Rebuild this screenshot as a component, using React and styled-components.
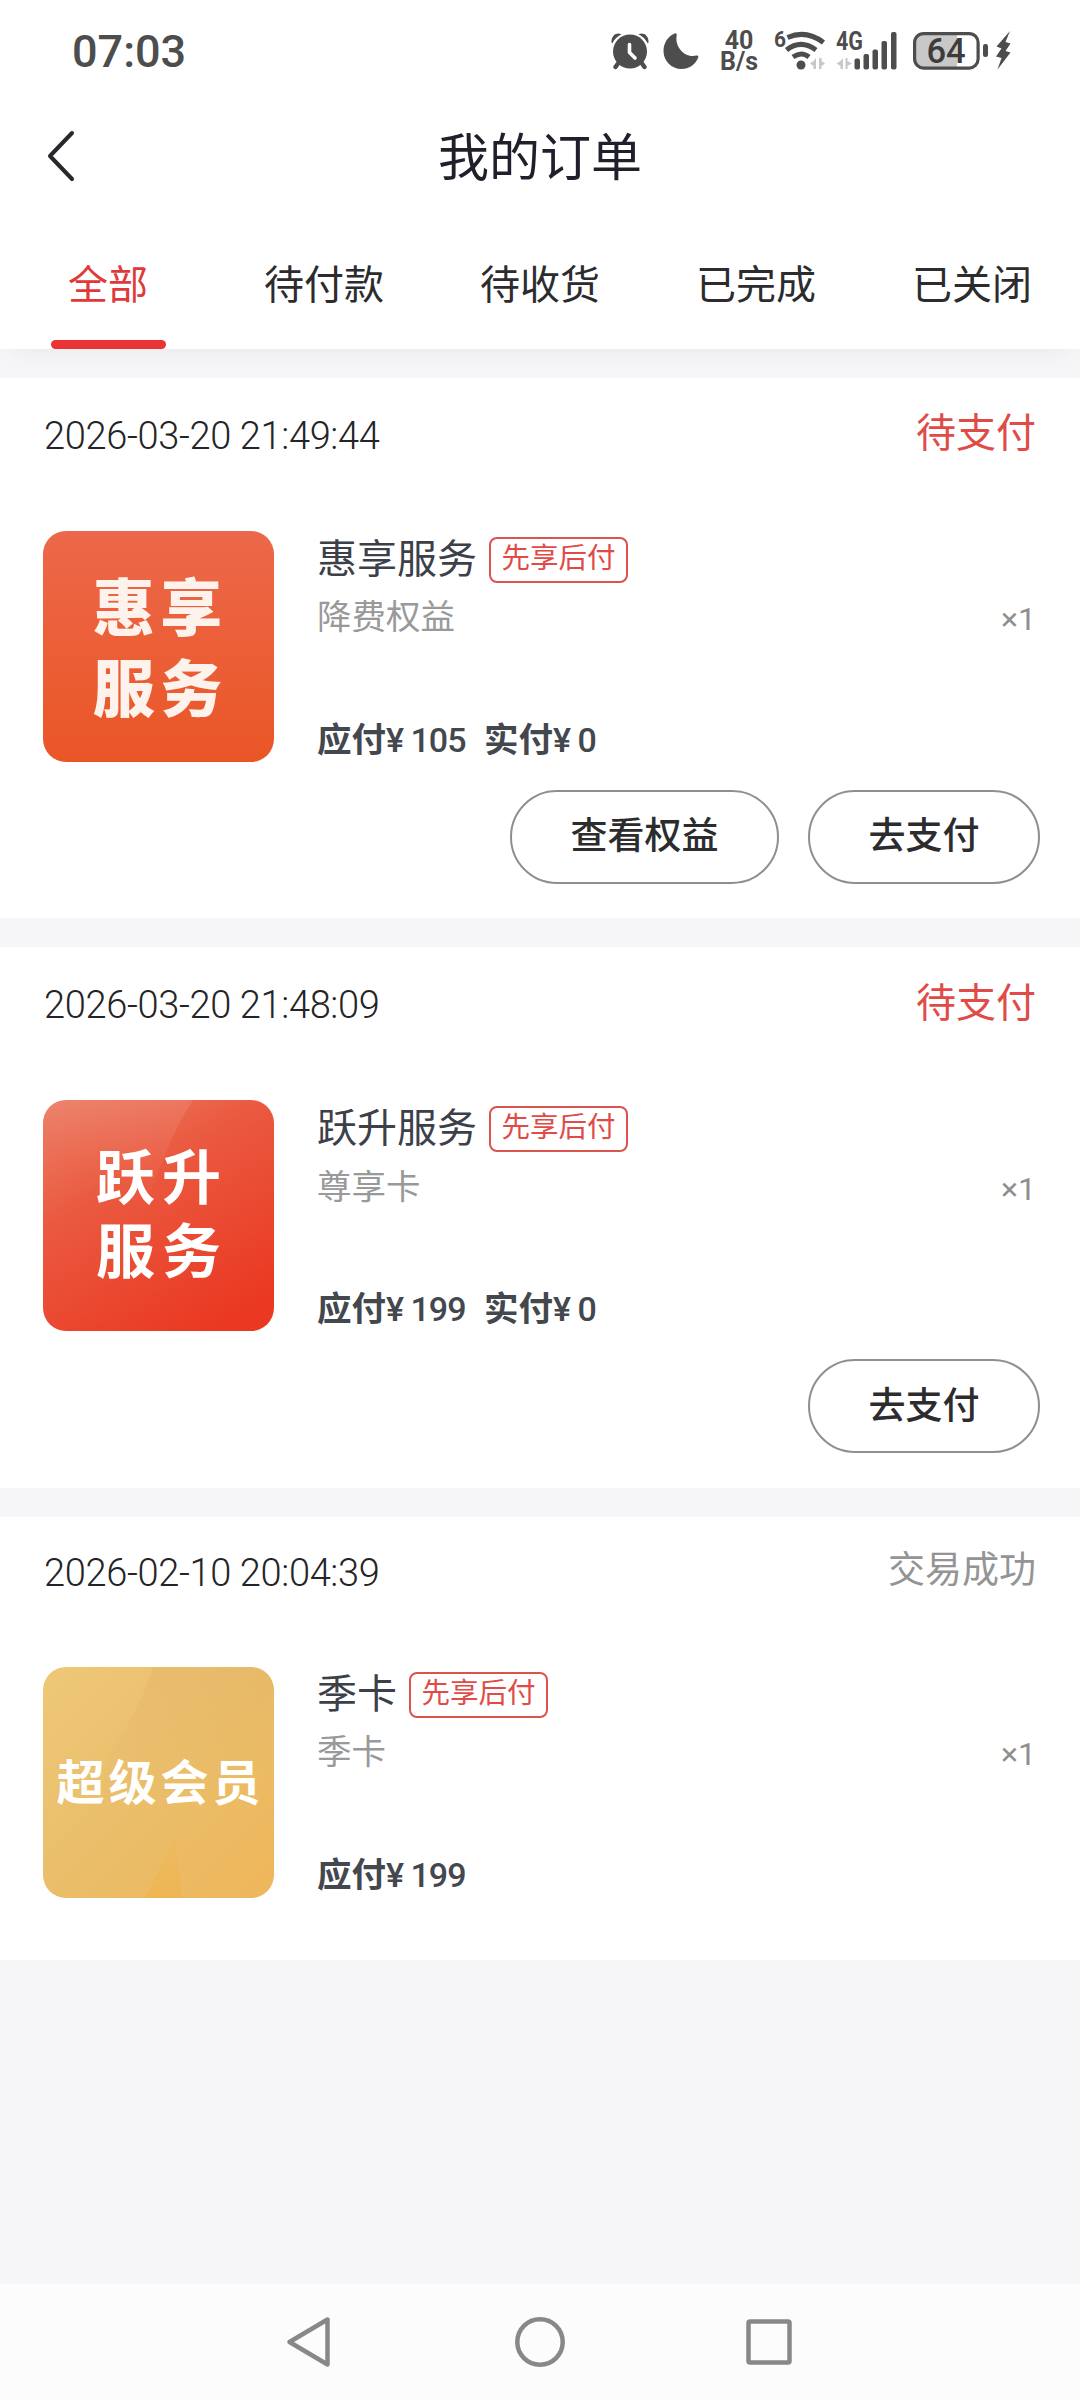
import React from 'react';
import styled, { createGlobalStyle } from 'styled-components';

const orders = [
  {
    id: 1,
    time: '2026-03-20 21:49:44',
    status: '待支付',
    name: '惠享服务',
    tag: '先享后付',
    desc: '降费权益',
    count: 1,
    due: 105,
    paid: 0,
    cover: 'orange',
    coverText: '惠享\n服务',
    actions: ['查看权益', '去支付'],
  },
  {
    id: 2,
    time: '2026-03-20 21:48:09',
    status: '待支付',
    name: '跃升服务',
    tag: '先享后付',
    desc: '尊享卡',
    count: 1,
    due: 199,
    paid: 0,
    cover: 'red',
    coverText: '跃升\n服务',
    actions: ['去支付'],
  },
  {
    id: 3,
    time: '2026-02-10 20:04:39',
    status: '交易成功',
    done: true,
    name: '季卡',
    tag: '先享后付',
    desc: '季卡',
    count: 1,
    due: 199,
    cover: 'gold',
    coverText: '超级会员',
    actions: [],
  },
];

const tabs = ['全部', '待付款', '待收货', '已完成', '已关闭'];

function StatusIcons() {
  return (
    <Icons>
      <svg width="38" height="40" viewBox="0 0 38 40">
        <circle cx="19" cy="21.5" r="17" fill="#4d4d4d" />
        <path d="M7 33.500 4.500 37M31 33.500 33.500 37" stroke="#4d4d4d" strokeWidth="4.400" strokeLinecap="round" />
        <path d="M0.500 12.500C0 5.500 5.500 2 10.500 4.200 6.500 6.200 3.500 9 1.200 13.500ZM37.500 12.500C38 5.500 32.500 2 27.500 4.200 31.500 6.200 34.500 9 36.800 13.500Z" fill="#4d4d4d" />
        <path d="M18.500 14.500V22.500L24 28" stroke="#fff" strokeWidth="3.600" strokeLinecap="round" strokeLinejoin="round" fill="none" />
      </svg>
      <Moon width="36" height="40" viewBox="0 0 36 40">
        <path d="M11.500 3.500C13 3 14 4 13.700 5.500 11.500 16 21 28.500 33.500 25.600 35 25.300 35.700 26.200 35.200 27.500 32.500 34.500 26 39 18.500 39 8.500 39 0.500 31 0.500 21 0.500 13 5 6.300 11.500 3.500Z" fill="#4d4d4d" />
      </Moon>
      <Speed>40{'\n'}B/s</Speed>
      <Wifi width="54" height="46" viewBox="0 -4 54 46">
        <text x="1" y="17" fontSize="22" fontWeight="700" fill="#4d4d4d" textLength="12" lengthAdjust="spacingAndGlyphs">6</text>
        <g fill="none" stroke="#4d4d4d" strokeWidth="5">
          <path d="M14.500 7.500C26 2.500 38 3 50.500 12.500" />
          <path d="M13.500 20C23 12.500 33 12.500 43 20" />
          <path d="M20 27C25.500 23 31 23 36 27" />
        </g>
        <circle cx="28" cy="35" r="4.500" fill="#4d4d4d" />
        <path d="M43 28V39H40.500V36L37 33.500 40.500 31ZM46 28V39H48.500V36L52 33.500 48.500 31V28Z" fill="#c8c8c8" />
      </Wifi>
      <Cell width="62" height="46" viewBox="0 -4 62 46">
        <text x="1" y="19.500" fontSize="25" fontWeight="700" fill="#4d4d4d" textLength="27" lengthAdjust="spacingAndGlyphs">4G</text>
        <path d="M8 28V39H5.500V36L1.500 33.500 5.500 31ZM10.500 28V39H12.500V36L17 33.500 12.500 31V28Z" fill="#c8c8c8" />
        <g fill="#4d4d4d">
          <rect x="19.500" y="28.500" width="5.500" height="11" rx="2" />
          <rect x="28.500" y="24" width="5.500" height="15.500" rx="2" />
          <rect x="37.500" y="19.500" width="5.500" height="20" rx="2" />
          <rect x="46.500" y="11" width="5.500" height="28.500" rx="2" />
          <rect x="56" y="2" width="5.500" height="37.500" rx="2" />
        </g>
      </Cell>
      <Battery width="76" height="42" viewBox="0 0 76 42">
        <path d="M10 3.500H44V38.500H10Q2 38.500 2 30V12Q2 3.500 10 3.500Z" fill="#c8c8c8" />
        <rect x="1.600" y="3.600" width="63.500" height="34.500" rx="9" fill="none" stroke="#4d4d4d" strokeWidth="3.200" />
        <rect x="70" y="14" width="5" height="13" rx="2.200" fill="#4d4d4d" />
        <text x="13.500" y="33" fontSize="34.500" fontWeight="500" fill="#3c3c3c">64</text>
      </Battery>
      <svg width="16" height="42" viewBox="0 0 16 42">
        <path d="M15 1 1.500 16.500 6.500 18.500 1 26.500 6.500 28 2.500 39.500 15.500 22.500 10.500 21 15.500 13.500 10.500 12Z" fill="#4d4d4d" />
      </svg>
    </Icons>
  );
}

function CoverShine({ kind }) {
  if (kind === 'red') {
    return (
      <Shine viewBox="0 0 231 231">
        <defs>
          <linearGradient id="redShine" x1="0.9" y1="0" x2="0.5" y2="0.6">
            <stop offset="0" stopColor="#fff" stopOpacity=".1" />
            <stop offset="1" stopColor="#fff" stopOpacity="0" />
          </linearGradient>
        </defs>
        <path d="M150 0Q134 24 124 50T95 120L0 160V0Z" fill="url(#redShine)" />
      </Shine>
    );
  }
  if (kind === 'gold') {
    return (
      <Shine viewBox="0 0 231 231">
        <defs>
          <linearGradient id="goldShine" x1="0.2" y1="0" x2="0.4" y2="1">
            <stop offset="0" stopColor="#dca860" stopOpacity=".26" />
            <stop offset="0.6" stopColor="#dca860" stopOpacity="0" />
          </linearGradient>
          <linearGradient id="goldBeam" x1="0" y1="0" x2="0" y2="1">
            <stop offset="0" stopColor="#f0b040" stopOpacity=".1" />
            <stop offset="1" stopColor="#f0b040" stopOpacity=".45" />
          </linearGradient>
        </defs>
        <path d="M110 0Q98 40 64 92L40 231H231V0Z" fill="url(#goldShine)" />
        <path d="M132 170 102 231H139Z" fill="url(#goldBeam)" />
      </Shine>
    );
  }
  return null;
}

function Order({ item }) {
  return (
    <Card $done={item.done}>
      <CardHead $done={item.done}>
        <Time>{item.time}</Time>
        <Status $done={item.done}>{item.status}</Status>
      </CardHead>
      <Goods>
        <Cover $kind={item.cover}>
          <CoverShine kind={item.cover} />
          <CoverText $kind={item.cover}>{item.coverText}</CoverText>
        </Cover>
        <Info $done={item.done}>
          <NameRow>
            <Name>{item.name}</Name>
            <Tag>{item.tag}</Tag>
          </NameRow>
          <DescRow>
            <Desc>{item.desc}</Desc>
            <Count>×{item.count}</Count>
          </DescRow>
          <Price>
            <Label>应付</Label>
            <Num>¥ {item.due}</Num>
            {item.paid !== undefined && (
              <>
                <Label $next>实付</Label>
                <Num>¥ {item.paid}</Num>
              </>
            )}
          </Price>
        </Info>
      </Goods>
      {item.actions.length > 0 && (
        <Actions>
          {item.actions.map((text) => (
            <Button key={text}>{text}</Button>
          ))}
        </Actions>
      )}
    </Card>
  );
}

function App() {
  return (
    <Wrap>
      <GlobalStyle />
      <StatusBar>
        <Clock>07:03</Clock>
        <StatusIcons />
      </StatusBar>
      <Header>
        <Back width="28" height="52" viewBox="0 0 28 52">
          <path d="M25 3 3 26 25 49" fill="none" stroke="#28282c" strokeWidth="4" strokeLinecap="round" strokeLinejoin="round" />
        </Back>
        <Title>我的订单</Title>
      </Header>
      <Tabs>
        {tabs.map((tab, i) => (
          <Tab key={tab} $active={i === 0}>{tab}</Tab>
        ))}
      </Tabs>
      <List>
        {orders.map((item) => (
          <Order key={item.id} item={item} />
        ))}
      </List>
      <NavBar>
        <svg width="52" height="52" viewBox="0 0 52 52">
          <path d="M43.500 3.500V48.500L5.500 26Z" fill="none" stroke="#888" strokeWidth="4.500" strokeLinejoin="round" />
        </svg>
        <svg width="52" height="52" viewBox="0 0 52 52">
          <circle cx="26" cy="26" r="22.700" fill="none" stroke="#888" strokeWidth="4.500" />
        </svg>
        <svg width="52" height="52" viewBox="0 0 52 52">
          <rect x="4.500" y="5.500" width="41" height="41" rx="1.500" fill="none" stroke="#888" strokeWidth="4.500" />
        </svg>
      </NavBar>
    </Wrap>
  );
}


//////// style ////////

const GlobalStyle = createGlobalStyle`
  body {
    margin: 0;
    background: #f6f6f9;
  }
  * {
    box-sizing: border-box;
  }
`;
const Wrap = styled.div`
  width: 1080px;
  height: 2400px;
  display: flex;
  flex-direction: column;
  background: #f6f6f9;
  overflow: hidden;
  font-family: 'Roboto', 'Noto Sans CJK SC', sans-serif;
  white-space: nowrap;
`;
const StatusBar = styled.div`
  height: 102px;
  padding: 0 69px 0 72px;
  display: flex;
  justify-content: space-between;
  background: #fff;
`;
const Clock = styled.div`
  font-size: 45px;
  line-height: 103px;
  font-weight: 500;
  color: #4d4d4d;
`;
const Icons = styled.div`
  display: flex;
  align-items: flex-start;
  padding-top: 30px;
`;
const Moon = styled.svg`
  margin-left: 14px;
`;
const Speed = styled.div`
  width: 40px;
  margin-left: 20px;
  padding-top: 1px;
  text-align: center;
  white-space: pre;
  font-size: 25px;
  font-weight: 700;
  line-height: 20.5px;
  color: #4d4d4d;
`;
const Wifi = styled.svg`
  margin: -4px 0 0 14px;
`;
const Cell = styled.svg`
  margin: -4px 0 0 8px;
`;
const Battery = styled.svg`
  margin: 0 6px 0 16px;
`;
const Header = styled.div`
  height: 116px;
  padding: 0 47px;
  display: flex;
  align-items: center;
  background: #fff;
`;
const Back = styled.svg`
  margin-top: -8px;
`;
const Title = styled.h1`
  flex: 1;
  margin: -2px 28px 0 0;
  text-align: center;
  font-size: 51px;
  line-height: 70px;
  font-weight: 400;
  color: #20202c;
`;
const Tabs = styled.div`
  height: 131px;
  flex-shrink: 0;
  display: flex;
  background: #fff;
  box-shadow: 0 14px 24px -12px rgba(0, 0, 0, 0.06);
`;
const Tab = styled.div`
  width: 216px;
  display: flex;
  flex-direction: column;
  align-items: center;
  justify-content: space-between;
  font-size: 40px;
  line-height: 136px;
  height: 131px;
  color: ${(p) => (p.$active ? '#e0393c' : '#2c2c2e')};

  &::after {
    content: '';
    flex-shrink: 0;
    width: 115px;
    height: 9px;
    margin-top: -14px;
    border-radius: 5px;
    background: ${(p) => (p.$active ? '#e93335' : 'transparent')};
  }
`;
const List = styled.div`
  flex: 1;
  padding-top: 28.5px;
  display: flex;
  flex-direction: column;
  gap: 29px;
`;
const Card = styled.div`
  height: ${(p) => (p.$done ? 443 : 540.5)}px;
  padding: 0 40px 0 43px;
  background: #fff;
`;
const CardHead = styled.div`
  height: ${(p) => (p.$done ? 109 : 113)}px;
  margin-bottom: ${(p) => (p.$done ? 41 : 40)}px;
  padding: 0 4px 0 1px;
  display: flex;
  justify-content: space-between;
  align-items: center;
`;
const Time = styled.div`
  padding-top: 3px;
  font-size: 38px;
  font-weight: 350;
  letter-spacing: -0.35px;
  color: #242426;
`;
const Status = styled.div`
  font-size: ${(p) => (p.$done ? 37 : 40)}px;
  line-height: 50px;
  color: ${(p) => (p.$done ? '#949494' : '#e04b48')};
`;
const Goods = styled.div`
  display: flex;
`;
const covers = {
  orange: 'linear-gradient(#ec684a, #ea5626)',
  red: 'linear-gradient(150deg, #ec8068 0%, #ea5a40 35%, #ea3822 90%)',
  gold: 'linear-gradient(135deg, #eec878 0%, #eabe6a 50%, #efb65a 100%)',
};
const Cover = styled.div`
  position: relative;
  width: 231px;
  height: 231px;
  flex-shrink: 0;
  border-radius: 23px;
  overflow: hidden;
  display: flex;
  align-items: center;
  justify-content: center;
  background: ${(p) => covers[p.$kind]};
`;
const Shine = styled.svg`
  position: absolute;
  inset: 0;
`;
const coverText = {
  orange: { size: 62, space: 5.5, line: 81, weight: 900, color: '#fdf3ec', up: 2, left: 2 },
  red: { size: 59, space: 7, line: 74, weight: 700, color: '#fff', up: 9, left: 0 },
  gold: { size: 48, space: 4, line: 60, weight: 700, color: '#fff', up: 6, left: 0 },
};
const CoverText = styled.div`
  z-index: 1;
  white-space: pre;
  font-family: 'Noto Sans CJK SC', sans-serif;
  font-size: ${(p) => coverText[p.$kind].size}px;
  line-height: ${(p) => coverText[p.$kind].line}px;
  letter-spacing: ${(p) => coverText[p.$kind].space}px;
  font-weight: ${(p) => coverText[p.$kind].weight};
  color: ${(p) => coverText[p.$kind].color};
  padding: 0 ${(p) => coverText[p.$kind].left}px ${(p) => coverText[p.$kind].up}px 0;
  margin-right: -${(p) => coverText[p.$kind].space}px;
`;
const Info = styled.div`
  flex: 1;
  padding: 0 4px 0 43px;
  margin-top: ${(p) => (p.$done ? -1 : 0)}px;
`;
const NameRow = styled.div`
  height: 56px;
  padding-top: 6px;
  display: flex;
  align-items: flex-start;
`;
const Name = styled.div`
  font-size: 40px;
  line-height: 45px;
  color: #3c4048;
`;
const Tag = styled.div`
  width: 139px;
  height: 46px;
  margin-left: 12px;
  border: 2px solid #d9534f;
  border-radius: 8px;
  text-align: center;
  font-size: 28.5px;
  line-height: 40px;
  color: #e04b48;
`;
const DescRow = styled.div`
  height: 60px;
  display: flex;
  justify-content: space-between;
  align-items: center;
`;
const Desc = styled.div`
  padding-bottom: 5px;
  font-size: 34.5px;
  color: #999;
`;
const Count = styled.div`
  padding-top: 5px;
  font-size: 32px;
  color: #8f8f8f;
`;
const Price = styled.div`
  margin-top: 68px;
  display: flex;
  font-size: 34.5px;
  line-height: 50px;
  font-weight: 500;
  color: #43474e;
`;
const Label = styled.span`
  font-weight: 700;
  margin-left: ${(p) => (p.$next ? 18.5 : 0)}px;
`;
const Num = styled.span`
  font-size: 34px;
  letter-spacing: -1px;
`;
const Actions = styled.div`
  margin-top: 25px;
  display: flex;
  justify-content: flex-end;
  gap: 29px;
`;
const Button = styled.button`
  height: 94px;
  padding: 0 58.500px 7px;
  border: 2px solid #8f8f8f;
  border-radius: 47px;
  background: #fff;
  font-family: inherit;
  font-size: 37px;
  font-weight: 500;
  color: #2c2c2e;
`;
const NavBar = styled.div`
  height: 116px;
  flex-shrink: 0;
  padding: 0 284px;
  display: flex;
  justify-content: space-between;
  align-items: center;
  background: #fcfcfc;
`;

export default App;
